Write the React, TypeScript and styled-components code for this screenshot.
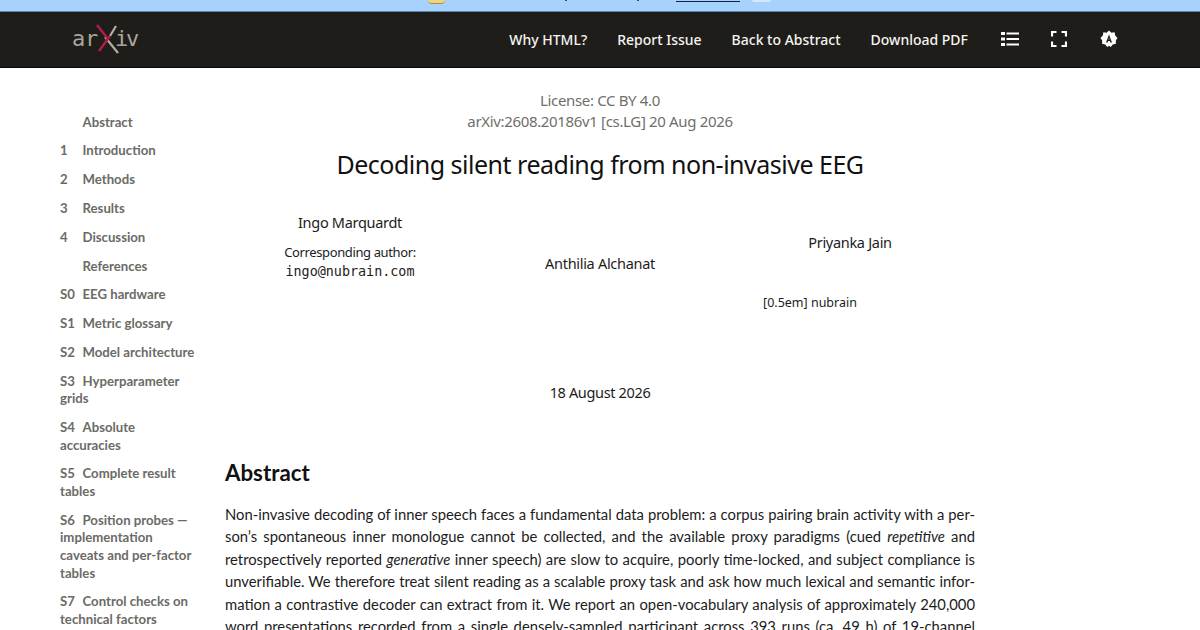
import styled, { createGlobalStyle } from 'styled-components';

const GlobalStyle = createGlobalStyle`
  html, body {
    margin: 0;
    padding: 0;
    background: #fff;
    overflow: hidden;
  }
  body {
    width: 1200px;
    height: 630px;
    font-family: "Noto Sans", "Lato", sans-serif;
    color: #1c1c1c;
  }
`;

const Page = styled.div`
  width: 1200px;
  height: 630px;
  overflow: hidden;
  display: flex;
  flex-direction: column;
`;

const TopStrip = styled.div`
  height: 11px;
  flex: none;
  background: #a6d2fd;
  border-bottom: 1px solid #5b86ad;
  display: flex;
  align-items: flex-start;
  padding-left: 428px;
`;

const StripEmoji = styled.span`
  display: block;
  width: 17px;
  height: 3px;
  background: #f3d678;
  border-bottom: 1px solid #9a8f70;
  border-radius: 0 0 7px 7px;
`;

const StripTick = styled.span<{ $gap: number }>`
  display: block;
  width: 2px;
  height: 1px;
  margin-left: ${p => p.$gap}px;
  background: #3a4a63;
`;

const StripRule = styled.span`
  display: block;
  width: 64px;
  height: 1px;
  margin: 1px 0 0 37px;
  background: #16233c;
`;

const StripButton = styled.span`
  display: block;
  width: 19px;
  height: 2px;
  margin-left: 12px;
  background: #d3e6fb;
  border-radius: 0 0 3px 3px;
`;

const Header = styled.header`
  height: 55px;
  flex: none;
  background: #1f1d19;
  border-bottom: 1px solid #0a0a0a;
  display: flex;
  align-items: center;
  justify-content: space-between;
  padding: 0 82px 0 72px;
`;

const Nav = styled.nav`
  display: flex;
  align-items: center;
`;

const NavLink = styled.a`
  font-family: "Noto Sans", sans-serif;
  font-size: 14px;
  font-weight: 500;
  color: #f4f4f2;
  margin-right: 30px;
`;

const IconButton = styled.span<{ $before?: number; $gap: number }>`
  display: flex;
  width: 18px;
  height: 20px;
  align-items: center;
  justify-content: center;
  margin: -2px ${p => p.$gap}px 0 ${p => p.$before ?? 0}px;
  color: #fff;
`;

const Body = styled.div`
  flex: 1;
  display: flex;
  min-height: 0;
`;

const Toc = styled.ol`
  width: 140px;
  flex: none;
  list-style: none;
  margin: 0;
  padding: 45.6px 0 0 60px;
  display: flex;
  flex-direction: column;
  gap: 11.2px;
`;

const TocItem = styled.li`
  font-family: "Lato", sans-serif;
  font-size: 13.2px;
  font-weight: 700;
  line-height: 17.6px;
  color: #6b6b66;
`;

const TocTag = styled.span`
  display: inline-block;
  width: 22.5px;
`;

const Article = styled.main`
  flex: 1;
  padding: 22px 0 0 25px;
  max-width: 750px;
`;

const Meta = styled.div`
  text-align: center;
  font-size: 15px;
  letter-spacing: -0.34px;
  line-height: 21px;
  color: #6f6f6a;
`;

const Title = styled.h1`
  margin: 16px 0 0;
  text-align: center;
  font-size: 25px;
  font-weight: 400;
  letter-spacing: -0.5px;
  line-height: 32px;
  color: #111;
`;

const Authors = styled.div`
  display: grid;
  grid-template-columns: 250px 250px 250px;
  margin-top: 32px;
  height: 78px;
`;

const Author = styled.div<{ $shift: number }>`
  padding-top: ${p => p.$shift}px;
  text-align: center;
  font-size: 14.5px;
  letter-spacing: -0.3px;
  line-height: 21px;
`;

const Note = styled.div`
  margin-top: 9px;
  font-size: 13px;
  letter-spacing: -0.38px;
  line-height: 20px;
`;

const Mono = styled.div`
  font-family: "DejaVu Sans Mono", monospace;
  font-size: 13.4px;
  letter-spacing: 0;
  line-height: 20px;
`;

const Affiliation = styled.div`
  margin-top: 3px;
  text-align: center;
  font-size: 12.5px;
  line-height: 19px;
  padding-left: 420px;
`;

const DateLine = styled.div`
  margin-top: 70px;
  text-align: center;
  font-size: 14.5px;
  letter-spacing: -0.35px;
  line-height: 21px;
`;

const Heading = styled.h2`
  margin: 56px 0 0;
  font-family: "Lato", sans-serif;
  font-size: 22.3px;
  font-weight: 700;
  line-height: 28px;
  color: #111;
`;

const Paragraph = styled.div`
  margin-top: 16px;
  font-family: "Lato", sans-serif;
  font-size: 14.8px;
  line-height: 22.4px;
`;

const Line = styled.div`
  text-align: justify;
  text-align-last: justify;
`;

const toc: [string, string[]][] = [
  ['', ['Abstract']],
  ['1', ['Introduction']],
  ['2', ['Methods']],
  ['3', ['Results']],
  ['4', ['Discussion']],
  ['', ['References']],
  ['S0', ['EEG hardware']],
  ['S1', ['Metric glossary']],
  ['S2', ['Model architecture']],
  ['S3', ['Hyperparameter', 'grids']],
  ['S4', ['Absolute', 'accuracies']],
  ['S5', ['Complete result', 'tables']],
  ['S6', ['Position probes —', 'implementation', 'caveats and per-factor', 'tables']],
  ['S7', ['Control checks on', 'technical factors']],
];

function Logo() {
  return (
    <svg width="70" height="35" viewBox="0 0 70 35" fill="none">
      <g fontFamily="DejaVu Sans Mono" fontSize="22" fill="#a9a59c">
        <text x="0" y="23.5">a</text>
        <text x="13" y="23.5">r</text>
        <text x="43" y="23.5">i</text>
        <text x="54" y="23.5">v</text>
      </g>
      <path d="M33 15 L46 31" stroke="#b5ae9f" strokeWidth="2.2" />
      <path d="M38 14 L44 4" stroke="#b5ae9f" strokeWidth="2.2" />
      <path d="M25 3 L36 17" stroke="#b31b4b" strokeWidth="2.4" />
      <path d="M27 29 L38 14" stroke="#b31b4b" strokeWidth="2.4" />
    </svg>
  );
}

export default function App() {
  return (
    <Page>
      <GlobalStyle />
      <TopStrip>
        <StripEmoji />
        <StripTick $gap={120} />
        <StripTick $gap={70} />
        <StripRule />
        <StripButton />
      </TopStrip>
      <Header>
        <Logo />
        <Nav>
          <NavLink>Why HTML?</NavLink>
          <NavLink>Report Issue</NavLink>
          <NavLink>Back to Abstract</NavLink>
          <NavLink>Download PDF</NavLink>
          <IconButton $before={3} $gap={31}>
            <svg width="18" height="16" viewBox="0 0 18 16" fill="#fff">
              <rect x="0" y="1" width="4" height="3" />
              <rect x="0" y="6.5" width="4" height="3" />
              <rect x="0" y="12" width="4" height="3" />
              <rect x="5.5" y="1.5" width="12.5" height="2" />
              <rect x="5.5" y="7" width="12.5" height="2" />
              <rect x="5.5" y="12.5" width="12.5" height="2" />
            </svg>
          </IconButton>
          <IconButton $gap={32}>
            <svg width="16" height="16" viewBox="0 0 16 16" fill="none" stroke="#fff" strokeWidth="2.2">
              <path d="M1 5.5V1h4.5M10.5 1H15v4.5M15 10.5V15h-4.5M5.5 15H1v-4.5" />
            </svg>
          </IconButton>
          <IconButton $gap={0}>
            <svg width="18" height="18" viewBox="0 0 18 18">
              <path fill="#fff" d="M9 0.5l2.4 2.2 3.2-.4.6 3.2 2.3 2.4-1.7 2.7.1 3.2-3.1.7L10.7 17 9 15.8 7.3 17l-2.1-2.5-3.1-.7.1-3.2L.5 7.9l2.3-2.4.6-3.2 3.2.4z" />
              <path fill="#1f1d19" d="M9 4.6l3 8h-1.7l-.5-1.5H8.2l-.5 1.5H6zm0 3.2L8.6 9.6h.9z" />
            </svg>
          </IconButton>
        </Nav>
      </Header>
      <Body>
        <Toc>
          {toc.map(([tag, lines]) => (
            <TocItem key={lines[0]}>
              <TocTag>{tag}</TocTag>
              {lines.map((l, i) => (
                <span key={l}>
                  {i > 0 && <br />}
                  {l}
                </span>
              ))}
            </TocItem>
          ))}
        </Toc>
        <Article>
          <Meta>
            License: CC BY 4.0
            <br />
            arXiv:2608.20186v1 [cs.LG] 20 Aug 2026
          </Meta>
          <Title>Decoding silent reading from non-invasive EEG</Title>
          <Authors>
            <Author $shift={0}>
              Ingo Marquardt
              <Note>Corresponding author:</Note>
              <Mono>ingo@nubrain.com</Mono>
            </Author>
            <Author $shift={41}>Anthilia Alchanat</Author>
            <Author $shift={20}>Priyanka Jain</Author>
          </Authors>
          <Affiliation>[0.5em] nubrain</Affiliation>
          <DateLine>18 August 2026</DateLine>
          <Heading>Abstract</Heading>
          <Paragraph>
            <Line>Non-invasive decoding of inner speech faces a fundamental data problem: a corpus pairing brain activity with a per-</Line>
            <Line>son’s spontaneous inner monologue cannot be collected, and the available proxy paradigms (cued <em>repetitive</em> and</Line>
            <Line>retrospectively reported <em>generative</em> inner speech) are slow to acquire, poorly time-locked, and subject compliance is</Line>
            <Line>unverifiable. We therefore treat silent reading as a scalable proxy task and ask how much lexical and semantic infor-</Line>
            <Line>mation a contrastive decoder can extract from it. We report an open-vocabulary analysis of approximately 240,000</Line>
            <Line>word presentations recorded from a single densely-sampled participant across 393 runs (ca. 49 h) of 19-channel</Line>
          </Paragraph>
        </Article>
      </Body>
    </Page>
  );
}
